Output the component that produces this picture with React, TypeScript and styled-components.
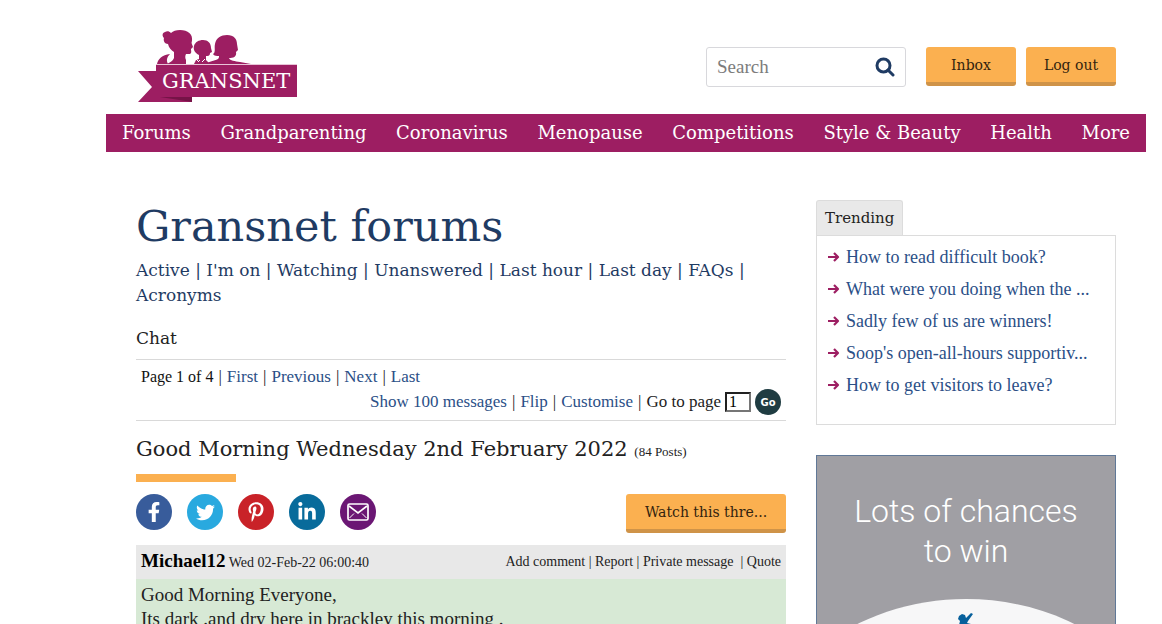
import React from "react";
import styled, { createGlobalStyle } from "styled-components";
import { FaFacebookF, FaTwitter, FaPinterestP, FaLinkedinIn } from "react-icons/fa";

const slab = `"DejaVu Serif", serif`;
const serif = `"Liberation Serif", serif`;
const navy = "#1f3b63";
const plum = "#9d1e62";
const linkBlue = "#2b4f87";

const GlobalStyle = createGlobalStyle`
  * { box-sizing: border-box; }
  body { margin: 0; background: #fff; color: #222; font-family: ${serif}; font-size: 19px; line-height: 24px; }
  a { color: inherit; text-decoration: none; }
  h1, h2, h3, p, ul { margin: 0; padding: 0; font-weight: 400; }
`;

const Page = styled.div`
  padding: 0 16px 0 106px;
`;

const Header = styled.header`
  display: flex;
  align-items: flex-start;
  justify-content: space-between;
  height: 114px;
  padding: 28px 30px 0;
`;

const LogoLink = styled.a`
  svg { display: block; }
`;

const Tools = styled.div`
  display: flex;
  align-items: flex-start;
  gap: 10px;
  padding-top: 19px;
`;

const SearchForm = styled.form`
  display: flex;
  align-items: center;
  width: 200px;
  height: 40px;
  margin-right: 10px;
  border: 1px solid #d8d8dc;
  border-radius: 3px;
`;

const SearchInput = styled.input`
  flex: 1;
  min-width: 0;
  height: 36px;
  padding: 0 0 0 10px;
  border: 0;
  outline: 0;
  background: transparent;
  font: 19px ${serif};
  &::placeholder { color: #7c7c7c; opacity: 1; }
`;

const SearchButton = styled.button`
  display: flex;
  padding: 0 10px 0 4px;
  border: 0;
  background: none;
`;

const OrangeButton = styled.button<{ $width: number }>`
  width: ${(p) => p.$width}px;
  height: 39px;
  padding: 0;
  border: 0;
  border-bottom: 4px solid #cf9348;
  border-radius: 3px;
  background: #fbb050;
  color: #33240f;
  font: 14px ${slab};
`;

const Nav = styled.nav`
  display: flex;
  justify-content: space-between;
  padding: 0 16px;
  background: ${plum};
  color: #fff;
  font: 18px/38px ${slab};
  white-space: nowrap;
`;

const Columns = styled.div`
  display: flex;
  align-items: flex-start;
  gap: 30px;
  padding: 48px 30px 0;
`;

const Main = styled.main`
  flex: 1;
  min-width: 0;
`;

const PageTitle = styled.h1`
  color: ${navy};
  font: 43px/52px ${slab};
`;

const ForumLinks = styled.nav`
  margin-top: 6px;
  color: ${navy};
  font: 17px/25px ${slab};
`;

const SectionName = styled.h3`
  margin-top: 18px;
  font: 17px/25px ${slab};
`;

const Pager = styled.div`
  margin-top: 8px;
  padding: 5px;
  border: solid #d9d9d9;
  border-width: 1px 0;
  font-size: 17px;
  line-height: 24px;
  a { color: ${linkBlue}; }
`;

const PagerRow = styled.div<{ $end?: boolean }>`
  display: flex;
  align-items: center;
  justify-content: ${(p) => (p.$end ? "flex-end" : "flex-start")};
  gap: 5px;
  height: ${(p) => (p.$end ? 26 : 24)}px;
`;

const PageCount = styled.span`
  color: #111;
  font-size: 16px;
`;

const PageForm = styled.form`
  display: flex;
  align-items: center;
  gap: 4px;
  input {
    width: 26px;
    height: 20px;
    padding: 0 0 0 2px;
    border: 2px inset #767676;
    background: #fff;
    font: 16px ${serif};
  }
`;

const GoButton = styled.button`
  width: 26px;
  height: 26px;
  padding: 0;
  border: 0;
  border-radius: 50%;
  background: #1f3c42;
  color: #fff;
  font: bold 10px "DejaVu Sans", sans-serif;
`;

const ThreadTitle = styled.h2`
  margin-top: 13px;
  font: 21px/30px ${slab};
  white-space: nowrap;
  small { color: #222; font: 13px ${serif}; }
  &::after {
    content: "";
    display: block;
    width: 100px;
    height: 8px;
    margin-top: 10px;
    background: #fbb050;
  }
`;

const ShareRow = styled.div`
  display: flex;
  align-items: flex-start;
  gap: 15px;
  margin: 12px 0;
`;

const ShareLink = styled.a<{ $color: string }>`
  display: flex;
  align-items: center;
  justify-content: center;
  width: 36px;
  height: 36px;
  border-radius: 50%;
  background: ${(p) => p.$color};
  color: #fff;
`;

const Spacer = styled.span`
  flex: 1;
`;

const PostHeader = styled.div`
  display: flex;
  align-items: center;
  justify-content: space-between;
  height: 34px;
  padding: 0 5px;
  background: #e8e8e8;
  font-size: 14px;
  strong { color: #000; font-size: 19px; }
`;

const PostActions = styled.span`
  white-space: pre;
`;

const PostBody = styled.div`
  padding: 4px 5px 24px;
  background: #d7e9d5;
`;

const Sidebar = styled.aside`
  flex: 0 0 300px;
`;

const TrendingTab = styled.h3`
  display: inline-block;
  height: 35px;
  padding: 0 8px;
  border: 1px solid #dcdcdc;
  border-bottom: 0;
  border-radius: 3px 3px 0 0;
  background: #e9e9e9;
  font: 15px/34px ${slab};
  vertical-align: top;
`;

const TrendingList = styled.ul`
  height: 190px;
  padding: 5px 10px;
  border: 1px solid #dcdcdc;
  list-style: none;
  font-size: 18px;
  line-height: 32px;
  white-space: nowrap;
  li { display: flex; align-items: center; gap: 6px; }
  a { color: ${linkBlue}; }
`;

const Advert = styled.a`
  display: block;
  margin-top: 30px;
  padding-top: 35px;
  border: 1px solid #607897;
  background: #a09fa4;
  color: #fff;
  font: 300 32px/40px Roboto, sans-serif;
  text-align: center;
  svg { display: block; width: 100%; margin-top: 27px; }
`;

const navItems = ["Forums", "Grandparenting", "Coronavirus", "Menopause", "Competitions", "Style & Beauty", "Health", "More"];
const forumLinks = ["Active", "I'm on", "Watching", "Unanswered", "Last hour", "Last day", "FAQs", "Acronyms"];
const trending = [
  "How to read difficult book?",
  "What were you doing when the ...",
  "Sadly few of us are winners!",
  "Soop's open-all-hours supportiv...",
  "How to get visitors to leave?",
];

function Logo() {
  return (
    <svg width="161" height="76" viewBox="0 0 161 76" role="img" aria-label="Gransnet">
      <g fill={plum}>
        <path d="M29 4c-3 1-3 4-1 6-1 3 1 6 4 6 1 4 3 6 6 8v6c-1 3-4 4-7 6h19v-4c-1-2-1-4 0-6h4c2-1 1-3 1-5l2-2c-1-3-2-4-1-6 1-7-4-11-12-11-4 0-7 1-9 3-2-2-4-2-6-1z" />
        <path d="M21 36c1-5 5-9 13-10-3 3-4 6-2 10z" />
        <path d="M58 18c1-4 5-6 9-6 5 0 8 3 8 8l1 4-2 1c0 3-2 3-4 3v4l4 4H58l2-4 3-1v-4c-4-2-6-5-5-9z" />
        <path d="M77 26c3-2 1-6 2-10 1-6 6-9 12-9 7 0 10 4 10 9l1 6-2 2c1 5-3 6-7 6 1 3 6 3 11 4l11 2H70c3-3 8-3 12-5 1-1 1-2 1-3-2 0-5 0-6-2z" />
        <path d="M20 37h141v32H56v5H2l14-15L2 43h18z" />
      </g>
      <path d="M20 36.500H161" stroke="#e8c4d7" />
      <path d="M52 34l3-3M57 34l2-3M62 34l2-2M66 34l3-3M54 30l2 2M60 31l2 2" stroke="#fff" />
      <path d="M24 69h32v5z" fill="#761347" />
      <text x="26" y="60" fill="#fff" fontFamily="DejaVu Serif, serif" fontSize="21">GRANSNET</text>
    </svg>
  );
}

function SearchIcon() {
  return (
    <svg width="20" height="20" viewBox="0 0 20 20" fill="none" stroke={navy} strokeWidth="3">
      <circle cx="8.500" cy="8.500" r="6.500" />
      <path d="M13 13l5 5" strokeLinecap="round" />
    </svg>
  );
}

function Arrow() {
  return (
    <svg width="13" height="12" viewBox="0 0 13 12" fill="none" stroke={plum} strokeWidth="2.200" strokeLinejoin="round">
      <path d="M1 6h10M7 2l4 4-4 4" />
    </svg>
  );
}

function Envelope() {
  return (
    <svg width="22" height="18" viewBox="0 0 22 18" fill="none" stroke="#fff" strokeWidth="1.700">
      <rect x="1" y="1" width="20" height="16" rx="1.500" />
      <path d="M2 3l9 7 9-7" />
      <path d="M2.500 15l4.500-4.500M19.500 15L15 10.500" strokeWidth="1" />
    </svg>
  );
}

export default function App() {
  return (
    <>
      <GlobalStyle />
      <Page>
        <Header>
          <LogoLink href="#"><Logo /></LogoLink>
          <Tools>
            <SearchForm>
              <SearchInput type="text" placeholder="Search" aria-label="Search" />
              <SearchButton type="button" aria-label="Search"><SearchIcon /></SearchButton>
            </SearchForm>
            <OrangeButton $width={90}>Inbox</OrangeButton>
            <OrangeButton $width={90}>Log out</OrangeButton>
          </Tools>
        </Header>
        <Nav>
          {navItems.map((n) => <a href="#" key={n}>{n}</a>)}
        </Nav>
        <Columns>
          <Main>
            <PageTitle>Gransnet forums</PageTitle>
            <ForumLinks>
              {forumLinks.map((l, i) => (
                <React.Fragment key={l}>
                  <a href="#">{l}</a>{i < forumLinks.length - 1 && " | "}
                </React.Fragment>
              ))}
            </ForumLinks>
            <SectionName>Chat</SectionName>
            <Pager>
              <PagerRow>
                <PageCount>Page 1 of 4</PageCount>|<a href="#">First</a>|<a href="#">Previous</a>|<a href="#">Next</a>|<a href="#">Last</a>
              </PagerRow>
              <PagerRow $end>
                <a href="#">Show 100 messages</a>|<a href="#">Flip</a>|<a href="#">Customise</a>|
                <PageForm>
                  <label htmlFor="page">Go to page</label>
                  <input id="page" type="text" defaultValue="1" />
                  <GoButton type="button">Go</GoButton>
                </PageForm>
              </PagerRow>
            </Pager>
            <ThreadTitle>Good Morning Wednesday 2nd February 2022 <small>(84 Posts)</small></ThreadTitle>
            <ShareRow>
              <ShareLink href="#" $color="#385c9b" aria-label="Facebook"><FaFacebookF size={20} /></ShareLink>
              <ShareLink href="#" $color="#29a9df" aria-label="Twitter"><FaTwitter size={19} /></ShareLink>
              <ShareLink href="#" $color="#c92228" aria-label="Pinterest"><FaPinterestP size={20} /></ShareLink>
              <ShareLink href="#" $color="#086b9b" aria-label="LinkedIn"><FaLinkedinIn size={20} /></ShareLink>
              <ShareLink href="#" $color="#6b1774" aria-label="Email"><Envelope /></ShareLink>
              <Spacer />
              <OrangeButton $width={160}>Watch this thre...</OrangeButton>
            </ShareRow>
            <article>
              <PostHeader>
                <span><strong>Michael12</strong> Wed 02-Feb-22 06:00:40</span>
                <PostActions>
                  <a href="#">Add comment</a> | <a href="#">Report</a> | <a href="#">Private message</a>{"  | "}<a href="#">Quote</a>
                </PostActions>
              </PostHeader>
              <PostBody>
                <p>Good Morning Everyone,</p>
                <p>Its dark .and dry here in brackley this morning .</p>
              </PostBody>
            </article>
          </Main>
          <Sidebar>
            <TrendingTab>Trending</TrendingTab>
            <TrendingList>
              {trending.map((t) => (
                <li key={t}><Arrow /><a href="#">{t}</a></li>
              ))}
            </TrendingList>
            <Advert href="#">
              Lots of chances<br />to win
              <svg viewBox="0 0 298 80">
                <path d="M0 52C42 18 95 1 149 1s107 17 149 51v28H0z" fill="#f7f7f8" />
                <path d="M142 18l3-2 3 1 1 3 5-5 2 1-5 7-1 2 4 1-4 3 2 9h-11l-1-9 2-2 1-4-2-2z" fill="#07609c" />
              </svg>
            </Advert>
          </Sidebar>
        </Columns>
      </Page>
    </>
  );
}
